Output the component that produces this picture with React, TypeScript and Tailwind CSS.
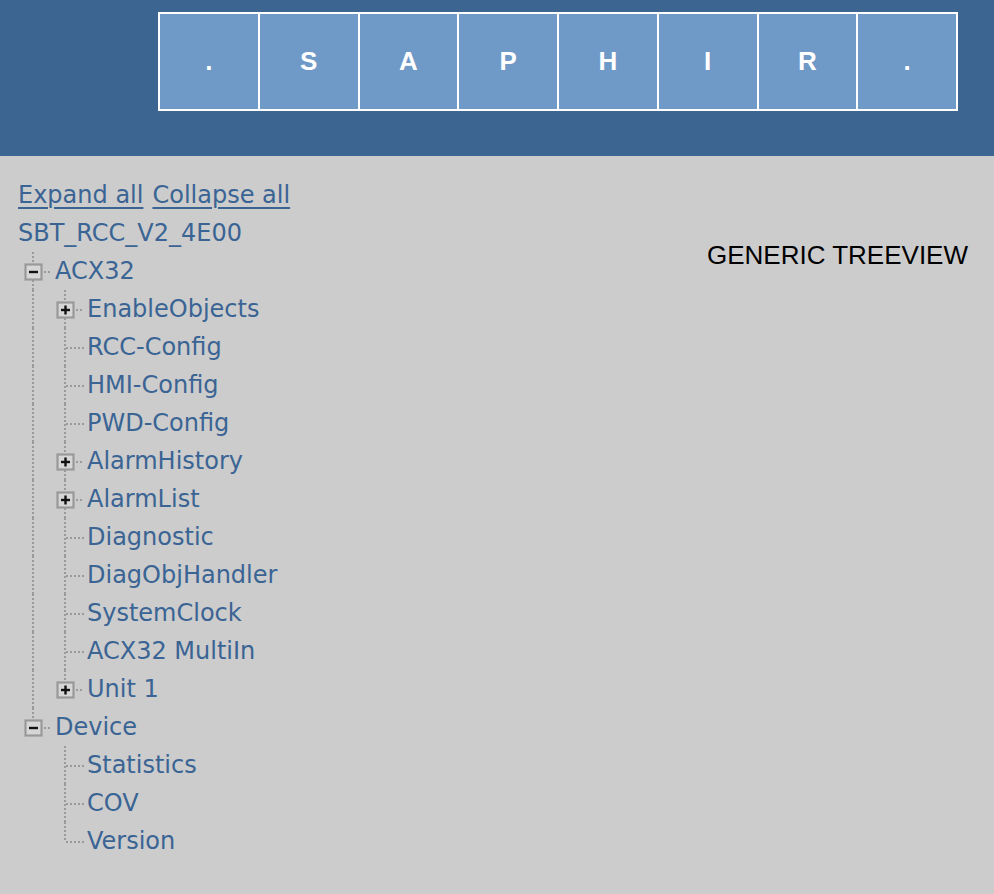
import React from "react";

type TNode = {
  label: string;
  open?: boolean;
  closed?: boolean;
  children?: TNode[];
};

const tree: TNode[] = [
  {
    label: "ACX32",
    open: true,
    children: [
      { label: "EnableObjects", closed: true },
      { label: "RCC-Config" },
      { label: "HMI-Config" },
      { label: "PWD-Config" },
      { label: "AlarmHistory", closed: true },
      { label: "AlarmList", closed: true },
      { label: "Diagnostic" },
      { label: "DiagObjHandler" },
      { label: "SystemClock" },
      { label: "ACX32 MultiIn" },
      { label: "Unit 1", closed: true },
    ],
  },
  {
    label: "Device",
    open: true,
    children: [{ label: "Statistics" }, { label: "COV" }, { label: "Version" }],
  },
];

const letters = [".", "S", "A", "P", "H", "I", "R", "."];
const dot = "#9a9a9a";

// vertical line for an ancestor that still has siblings below it
const Indent = ({ line }: { line: boolean }) => (
  <svg width="32" height="38" className="shrink-0">
    {line && (
      <line x1="15" y1="0" x2="15" y2="38" stroke={dot} strokeWidth="2" strokeDasharray="2 2" />
    )}
  </svg>
);

const Join = ({ last, node }: { last: boolean; node: TNode }) => {
  const hasBox = node.open || node.closed;
  return (
    <svg width="34" height="38" className="shrink-0">
      <line x1="15" y1="0" x2="15" y2={hasBox ? 12 : 20} stroke={dot} strokeWidth="2" strokeDasharray="2 2" />
      {!last && (
        <line x1="15" y1={hasBox ? 28 : 20} x2="15" y2="38" stroke={dot} strokeWidth="2" strokeDasharray="2 2" />
      )}
      <line x1={hasBox ? 26 : 16} y1="20" x2="34" y2="20" stroke={dot} strokeWidth="2" strokeDasharray="2 2" />
      {hasBox && (
        <>
          <rect x="7.5" y="12.5" width="16" height="15" fill="#d6d6d6" stroke="#999999" strokeWidth="2.2" />
          <line x1="11" y1="20" x2="20" y2="20" stroke="#111" strokeWidth="2.4" />
          {node.closed && <line x1="15.5" y1="15.5" x2="15.5" y2="24.5" stroke="#111" strokeWidth="2.4" />}
        </>
      )}
    </svg>
  );
};

const Rows = ({ nodes, lines }: { nodes: TNode[]; lines: boolean[] }) => (
  <>
    {nodes.map((n, i) => {
      const last = i === nodes.length - 1;
      return (
        <React.Fragment key={n.label}>
          <div className="flex h-[38px] items-center">
            {lines.map((l, k) => (
              <Indent key={k} line={l} />
            ))}
            <Join last={last} node={n} />
            <span className="ml-[3px] whitespace-nowrap">{n.label}</span>
          </div>
          {n.open && n.children && <Rows nodes={n.children} lines={[...lines, !last]} />}
        </React.Fragment>
      );
    })}
  </>
);

const App = () => {
  return (
    <div className="min-h-screen bg-[#cccccc]">
      <header className="h-[156px] bg-[#3c6591] pl-[158px] pt-[12px]">
        <div className="flex h-[99px] w-[800px] divide-x-2 divide-white border-2 border-white font-['Liberation_Sans',Arial,sans-serif]">
          {letters.map((l, i) => (
            <div
              key={i}
              className="flex flex-1 items-center justify-center bg-[#6f99c7] text-[26px] font-bold text-white"
            >
              {l}
            </div>
          ))}
        </div>
      </header>

      <div className="flex pt-[20px]">
        <div className="pl-[18px] font-['DejaVu_Sans',Verdana,sans-serif] text-[24px] leading-[38px] text-[#3a6494]">
          <div className="flex h-[38px] items-center gap-[9px]">
            <a href="#" className="underline decoration-2 underline-offset-[4px]">
              Expand all
            </a>
            <a href="#" className="underline decoration-2 underline-offset-[4px]">
              Collapse all
            </a>
          </div>
          <div className="h-[38px]">SBT_RCC_V2_4E00</div>
          <Rows nodes={tree} lines={[]} />
        </div>
        <div className="flex-1 pr-[26px] pt-[64px] text-right font-['Liberation_Sans',Arial,sans-serif] text-[26px] leading-[30px] text-black">
          GENERIC TREEVIEW
        </div>
      </div>
    </div>
  );
};

export default App;
